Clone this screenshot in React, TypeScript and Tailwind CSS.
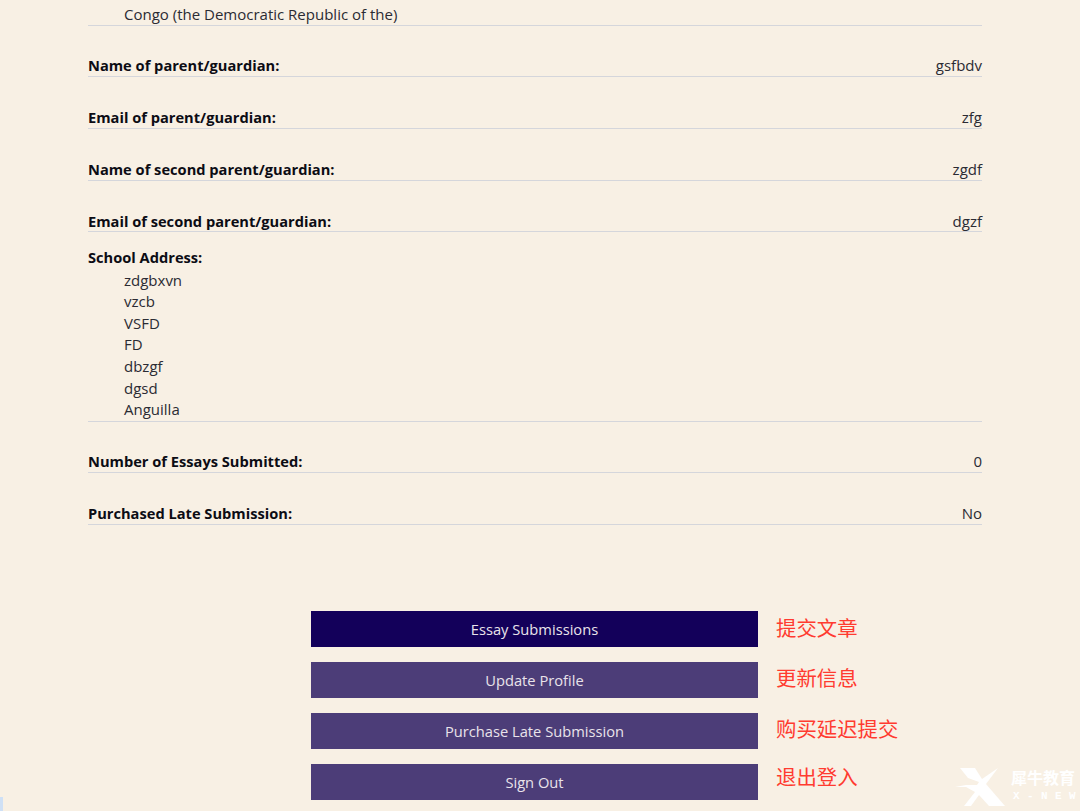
const font = "font-['Open_Sans','Noto_Sans_CJK_SC',sans-serif]";

function Row({ label, value }: { label: string; value: string }) {
  return (
    <div className="mt-[29.1px] flex h-[22.6px] items-end justify-between border-b border-[#d5d6db] text-[15px] leading-[20.8px]">
      <span className="text-[14.65px] font-bold text-[#0c0c14]">{label}</span>
      <span className="text-[#2b2b33]">{value}</span>
    </div>
  );
}

function Action({
  label,
  note,
  noteClass,
  active,
}: {
  label: string;
  note: string;
  noteClass: string;
  active?: boolean;
}) {
  return (
    <div className="flex h-[36px] items-center">
      <div
        className={`flex h-[36px] w-[447px] items-center justify-center text-[14.7px] text-[#e9e3ea] ${
          active ? "bg-[#13005a]" : "bg-[#4c3d78]"
        }`}
      >
        {label}
      </div>
      <span
        className={`ml-[18px] text-[20.4px] leading-[28px] text-[#ff3b30] font-['Noto_Sans_CJK_SC',sans-serif] ${noteClass}`}
      >
        {note}
      </span>
    </div>
  );
}

export default function App() {
  const address = ["zdgbxvn", "vzcb", "VSFD", "FD", "dbzgf", "dgsd", "Anguilla"];
  return (
    <div className={`relative h-[811px] w-[1080px] overflow-hidden bg-[#f8f0e4] ${font}`}>
      <div className="ml-[88px] w-[894px] pt-[3px]">
        <div className="h-[22.6px] border-b border-[#d5d6db] pl-[36px] pt-[1px] text-[15px] leading-[21.6px] text-[#2b2b33]">
          Congo (the Democratic Republic of the)
        </div>
        <Row label="Name of parent/guardian:" value="gsfbdv" />
        <Row label="Email of parent/guardian:" value="zfg" />
        <Row label="Name of second parent/guardian:" value="zgdf" />
        <Row label="Email of second parent/guardian:" value="dgzf" />
        <div className="mt-[13.6px] -mb-[0.5px] border-b border-[#d5d6db] pt-[1px] text-[15px] leading-[21.6px]">
          <div className="mb-[1px] text-[14.65px] font-bold text-[#0c0c14]">School Address:</div>
          <div className="pl-[36px] text-[#2b2b33]">
            {address.map((line) => (
              <div key={line}>{line}</div>
            ))}
          </div>
        </div>
        <Row label="Number of Essays Submitted:" value="0" />
        <Row label="Purchased Late Submission:" value="No" />
      </div>

      <div className="ml-[311px] mt-[86.6px] flex flex-col gap-[14.8px]">
        <Action label="Essay Submissions" note="提交文章" noteClass="mb-[5px]" active />
        <Action label="Update Profile" note="更新信息" noteClass="mb-[5px]" />
        <Action label="Purchase Late Submission" note="购买延迟提交" noteClass="mb-[5px]" />
        <Action label="Sign Out" note="退出登入" noteClass="mb-[12px]" />
      </div>

      <div className="absolute bottom-0 left-0 h-[14px] w-[3px] bg-[#cfe0f5]" />

      <div className="absolute left-[950px] top-[762px] flex text-white">
        <svg width="60" height="49" viewBox="0 0 60 49" fill="#ffffff">
          <path d="M10 6 L25 6 L32 17 L48 6 L36 22 L55 44 L39 44 L29 33 L21 44 L14 44 L25 30 L16 25 L5 25 L16 23 L27 23 L29 20 L18 16 Z" />
        </svg>
        <div className="ml-[1px] flex flex-col pt-[6px]">
          <span className="text-[16px] leading-[19px] font-bold font-['Noto_Sans_CJK_SC',sans-serif]">犀牛教育</span>
          <span className="ml-[2px] mt-[3px] whitespace-nowrap text-[11px] font-bold leading-[13px] font-['Liberation_Mono',monospace]">
            <span className="tracking-[7.4px]">X-NE</span>W
          </span>
        </div>
      </div>
    </div>
  );
}
